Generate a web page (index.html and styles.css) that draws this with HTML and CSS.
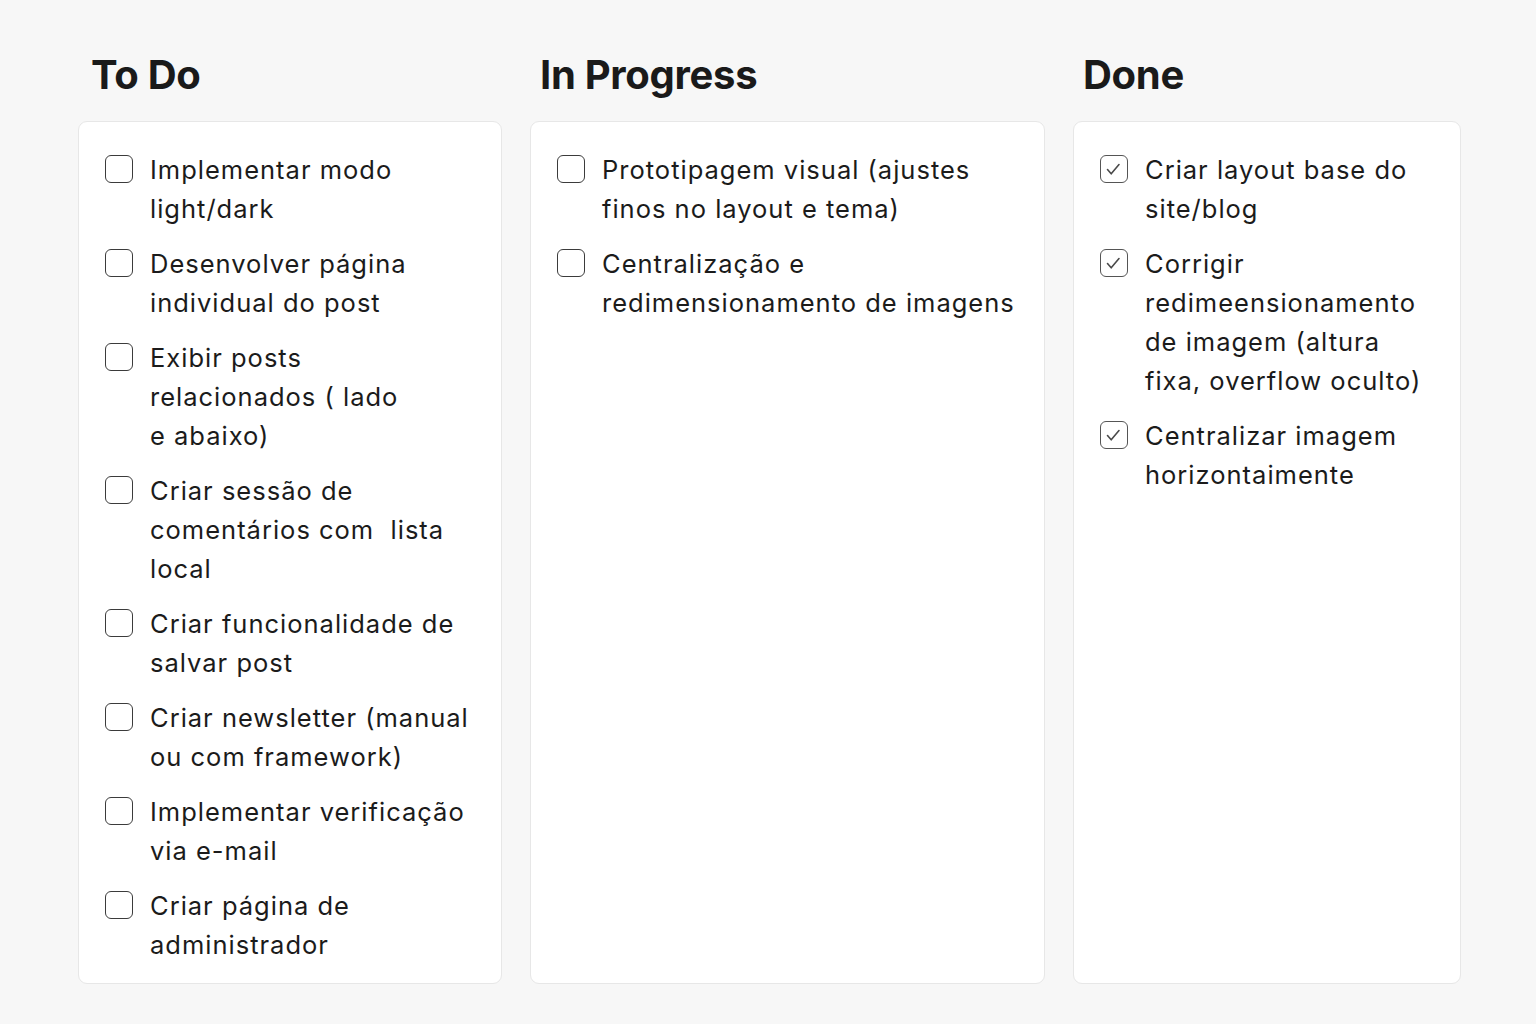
FILE: index.html
```html
<!DOCTYPE html>
<html lang="pt">
<head>
<meta charset="utf-8">
<title>Kanban</title>
<link rel="stylesheet" href="styles.css">
</head>
<body>
<main class="board">
  <section class="column">
    <h2 class="column-title title-todo">To Do</h2>
    <div class="card">
      <div class="item"><span class="box"></span><span class="text">Implementar modo<br>light/dark</span></div>
      <div class="item"><span class="box"></span><span class="text">Desenvolver página<br>individual do post</span></div>
      <div class="item"><span class="box"></span><span class="text">Exibir posts<br>relacionados (&nbsp;lado<br>e abaixo)</span></div>
      <div class="item"><span class="box"></span><span class="text">Criar sessão de<br>comentários com&nbsp; lista<br>local</span></div>
      <div class="item"><span class="box"></span><span class="text">Criar funcionalidade de<br>salvar post</span></div>
      <div class="item"><span class="box"></span><span class="text">Criar newsletter (manual<br>ou com framework)</span></div>
      <div class="item"><span class="box"></span><span class="text">Implementar verificação<br>via e-mail</span></div>
      <div class="item"><span class="box"></span><span class="text">Criar página de<br>administrador</span></div>
    </div>
  </section>
  <section class="column">
    <h2 class="column-title">In Progress</h2>
    <div class="card">
      <div class="item"><span class="box"></span><span class="text">Prototipagem visual (ajustes<br>finos no layout e tema)</span></div>
      <div class="item"><span class="box"></span><span class="text">Centralização e<br>redimensionamento de imagens</span></div>
    </div>
  </section>
  <section class="column">
    <h2 class="column-title">Done</h2>
    <div class="card">
      <div class="item"><span class="box checked"><svg viewBox="0 0 28 28"><path d="M8.5 15.5 L12.2 19.8 L20 10.5"/></svg></span><span class="text">Criar layout base do<br>site/blog</span></div>
      <div class="item"><span class="box checked"><svg viewBox="0 0 28 28"><path d="M8.5 15.5 L12.2 19.8 L20 10.5"/></svg></span><span class="text">Corrigir<br>redimeensionamento<br>de imagem (altura<br>fixa, overflow oculto)</span></div>
      <div class="item"><span class="box checked"><svg viewBox="0 0 28 28"><path d="M8.5 15.5 L12.2 19.8 L20 10.5"/></svg></span><span class="text">Centralizar imagem<br>horizontaimente</span></div>
    </div>
  </section>
</main>
</body>
</html>
```
FILE: styles.css
```css
* { box-sizing: border-box; }

html, body {
  margin: 0;
  padding: 0;
  background: #f7f7f7;
}

body {
  font-family: Inter, "Noto Sans", "Liberation Sans", sans-serif;
  color: #1b1b1b;
  width: 1536px;
  height: 1024px;
  overflow: hidden;
}

.board {
  display: grid;
  grid-template-columns: 424px 515px 388px;
  column-gap: 28px;
  padding: 51px 0 0 78px;
  height: 984px;
}

.column {
  display: flex;
  flex-direction: column;
}

.column-title {
  margin: 0 0 22px 0;
  padding-left: 10px;
  font-size: 40px;
  line-height: 48px;
  font-weight: 700;
  letter-spacing: -0.3px;
  color: #1a1a1a;
}

.title-todo { padding-left: 13px; }

.card {
  flex: 1;
  background: #ffffff;
  border: 1px solid #e7e7e7;
  border-radius: 9px;
  padding: 28px 12px 17px 26px;
  display: flex;
  flex-direction: column;
  gap: 16px;
}

.item {
  display: flex;
  align-items: flex-start;
  gap: 17px;
}

.box {
  flex: none;
  width: 28px;
  height: 28px;
  margin-top: 5px;
  border: 1.9px solid #3b3b3b;
  border-radius: 6px;
  background: #fff;
  overflow: visible;
}

.box.checked {
  border-color: #555555;
}

.box svg {
  display: block;
  width: 28px;
  height: 28px;
  margin: -1.9px;
}

.box svg path {
  fill: none;
  stroke: #4a4a4a;
  stroke-width: 1.6;
  stroke-linecap: round;
  stroke-linejoin: round;
}

.text {
  font-size: 25.5px;
  line-height: 39px;
  white-space: nowrap;
  letter-spacing: 1px;
}
```
